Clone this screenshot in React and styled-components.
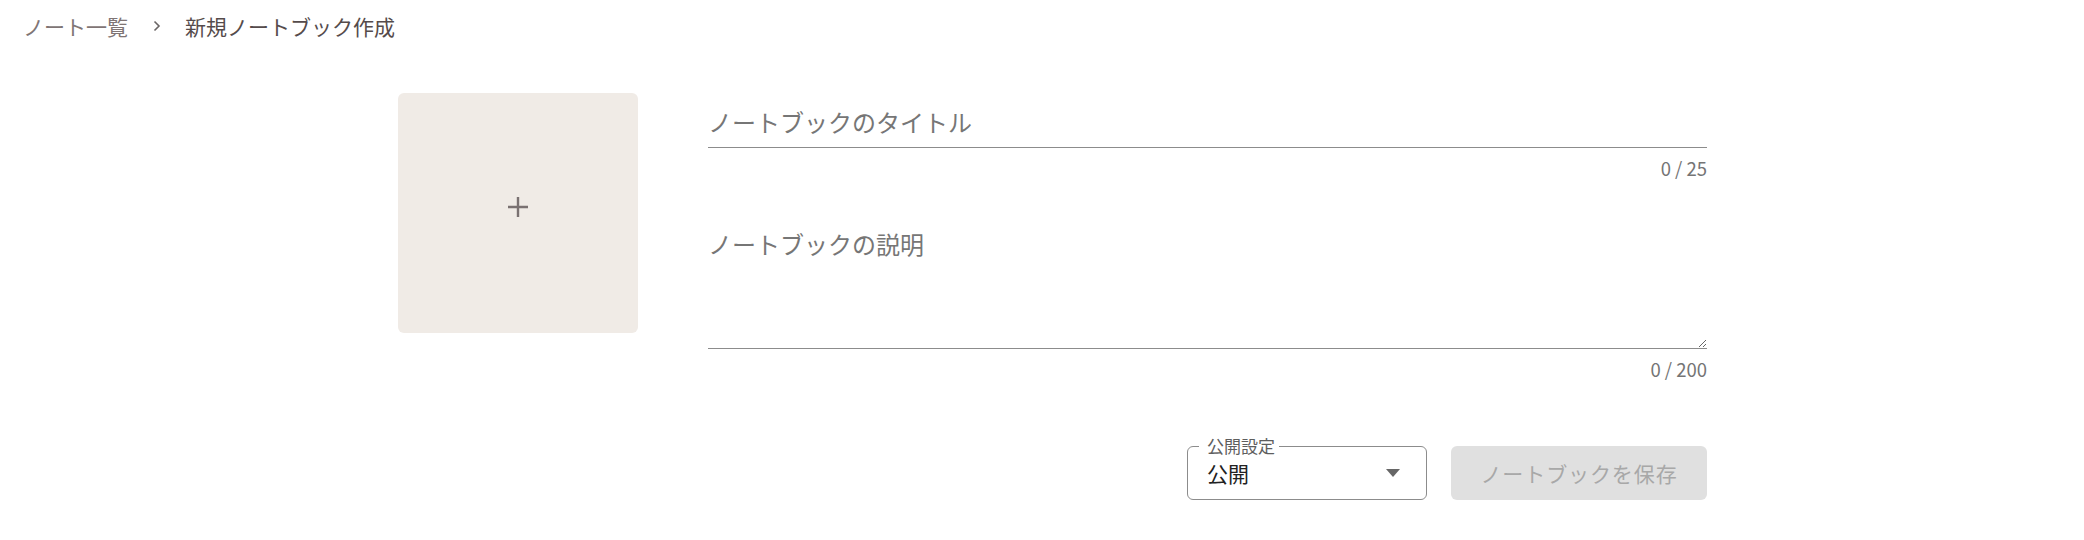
import React, { useState } from 'react'
import styled, { createGlobalStyle } from 'styled-components'

const GlobalStyle = createGlobalStyle`
  body {
    margin: 0;
    background: #fff;
    font-family: "Noto Sans CJK JP", "Noto Sans", sans-serif;
  }
`

const Page = styled.div`
  width: 2084px;
  min-height: 540px;
`

const Breadcrumbs = styled.nav`
  display: flex;
  align-items: center;
  height: 52px;
  padding-left: 23px;
  font-size: 21px;
`

const Crumb = styled.span`
  color: ${(p) => (p.current ? '#554b4b' : '#807575')};
  cursor: ${(p) => (p.current ? 'default' : 'pointer')};
`

const Separator = styled.span`
  display: flex;
  align-items: center;
  margin: 0 23px 0 24px;
  color: #6a6565;
`

const Main = styled.main`
  display: flex;
  gap: 70px;
  padding: 41px 0 0 398px;
`

const ImagePicker = styled.button`
  flex: none;
  display: flex;
  align-items: center;
  justify-content: center;
  width: 240px;
  height: 240px;
  border: none;
  border-radius: 6px;
  background: #f0ebe6;
  cursor: pointer;
  padding: 0 0 12px;
`

const Form = styled.div`
  width: 999px;
  display: flex;
  flex-direction: column;
`

const TitleInput = styled.input`
  font-family: inherit;
  font-size: 24px;
  line-height: 32px;
  color: #333;
  border: none;
  border-bottom: 1px solid #8c8c8c;
  padding: 13px 0 9px;
  outline: none;
  background: transparent;

  &::placeholder {
    color: #767676;
  }
`

const DescInput = styled.textarea`
  font-family: inherit;
  font-size: 24px;
  line-height: 32px;
  color: #333;
  border: none;
  border-bottom: 1px solid #8c8c8c;
  padding: 11px 0 0;
  height: 132px;
  box-sizing: border-box;
  margin-top: 37px;
  outline: none;
  resize: vertical;
  background: transparent;

  &::placeholder {
    color: #767676;
  }
`

const Counter = styled.div`
  margin-top: 8px;
  text-align: right;
  font-size: 18.5px;
  line-height: 24px;
  color: #757575;
`

const Actions = styled.div`
  display: flex;
  justify-content: flex-end;
  gap: 24px;
  margin-top: 65px;
`

const SelectBox = styled.div`
  position: relative;
  box-sizing: border-box;
  width: 240px;
  height: 54px;
  border: 1px solid #8c8c8c;
  border-radius: 6px;
  display: flex;
  align-items: center;
  justify-content: space-between;
  padding: 0 26px 0 19px;
  cursor: pointer;
`

const SelectLabel = styled.span`
  position: absolute;
  top: -12px;
  left: 11px;
  padding: 0 4px 0 8px;
  background: #fff;
  font-size: 17px;
  line-height: 22px;
  color: #5e5e5e;
`

const SelectValue = styled.span`
  font-size: 21px;
  line-height: 28px;
  color: #222;
`

const SaveButton = styled.button`
  width: 256px;
  height: 54px;
  border: none;
  border-radius: 6px;
  background: #e0e0e0;
  color: #a8a8a8;
  font-family: inherit;
  font-size: 21px;
  letter-spacing: 0.9px;
  padding-bottom: 2px;
  cursor: default;
`

const Chevron = () => (
  <svg width="10" height="14" viewBox="0 0 10 14">
    <path d="M2.5 2.5 7 7l-4.5 4.5" fill="none" stroke="currentColor" strokeWidth="1.6" />
  </svg>
)

const Plus = () => (
  <svg width="22" height="22" viewBox="0 0 22 22">
    <path d="M11 1v20M1 11h20" stroke="#7a7171" strokeWidth="2.4" />
  </svg>
)

const Caret = () => (
  <svg width="14" height="8" viewBox="0 0 14 8">
    <path d="M0 0h14L7 8z" fill="#666" />
  </svg>
)

const App = () => {
  const [title, setTitle] = useState('')
  const [desc, setDesc] = useState('')

  return (
    <>
      <GlobalStyle />
      <Page>
        <Breadcrumbs>
          <Crumb>ノート一覧</Crumb>
          <Separator>
            <Chevron />
          </Separator>
          <Crumb current>新規ノートブック作成</Crumb>
        </Breadcrumbs>
        <Main>
          <ImagePicker>
            <Plus />
          </ImagePicker>
          <Form>
            <TitleInput
              value={title}
              maxLength={25}
              onChange={(e) => setTitle(e.target.value)}
              placeholder="ノートブックのタイトル"
            />
            <Counter>{title.length} / 25</Counter>
            <DescInput
              value={desc}
              maxLength={200}
              onChange={(e) => setDesc(e.target.value)}
              placeholder="ノートブックの説明"
            />
            <Counter>{desc.length} / 200</Counter>
            <Actions>
              <SelectBox>
                <SelectLabel>公開設定</SelectLabel>
                <SelectValue>公開</SelectValue>
                <Caret />
              </SelectBox>
              <SaveButton disabled>ノートブックを保存</SaveButton>
            </Actions>
          </Form>
        </Main>
      </Page>
    </>
  )
}

export default App
